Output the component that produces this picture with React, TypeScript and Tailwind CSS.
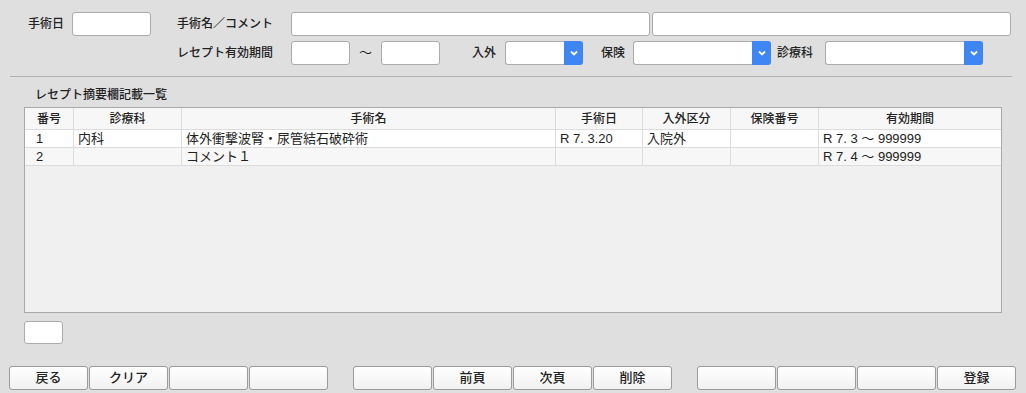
import React from "react";

const FONT = { fontFamily: '"Liberation Sans", "Noto Sans CJK JP", sans-serif' };

function Input({ w }: { w: string }) {
  return <div className={`${w} h-[24px] bg-white border border-[#ababab] rounded-[3px] shrink-0`} />;
}

function Select({ w }: { w: string }) {
  return (
    <div className={`${w} h-[24px] flex shrink-0`}>
      <div className="flex-1 bg-white border border-[#ababab] border-r-0 rounded-l-[3px]" />
      <div className="w-[19px] bg-[#3f86f5] rounded-r-[3px] flex items-center justify-center">
        <svg width="8" height="6" viewBox="0 0 8 6">
          <path d="M1 1.5 L4 4.5 L7 1.5" stroke="white" strokeWidth="1.8" fill="none" />
        </svg>
      </div>
    </div>
  );
}

function Btn({ label }: { label?: string }) {
  return (
    <div className="w-[79px] h-[24px] shrink-0 rounded-[3px] border border-[#9b9b9b] bg-gradient-to-b from-white to-[#f1f1f1] flex items-center justify-center text-[13px] font-medium text-[#222]">
      {label ?? ""}
    </div>
  );
}

const cols = [
  { w: "w-[49px]", h: "番号", pad: "pl-[11px]" },
  { w: "w-[108px]", h: "診療科", pad: "pl-[4px]" },
  { w: "w-[374px]", h: "手術名", pad: "pl-[4px]" },
  { w: "w-[87px]", h: "手術日", pad: "pl-[4px]" },
  { w: "w-[88px]", h: "入外区分", pad: "pl-[4px]" },
  { w: "w-[88px]", h: "保険番号", pad: "pl-[4px]" },
  { w: "w-[182px]", h: "有効期間", pad: "pl-[4px]" },
];

const rows = [
  ["1", "内科", "体外衝撃波腎・尿管結石破砕術", "R 7. 3.20", "入院外", "", "R 7. 3 ～ 999999"],
  ["2", "", "コメント１", "", "", "", "R 7. 4 ～ 999999"],
];

export default function App() {
  return (
    <div className="w-[1026px] h-[393px] bg-[#dfdfdf] text-[#222] overflow-hidden" style={FONT}>
      <div className="pt-[12px]">
        <div className="flex items-center h-[24px] pl-[28px]">
          <div className="w-[44px] text-[12px] font-medium">手術日</div>
          <Input w="w-[79px]" />
          <div className="w-[26px]" />
          <div className="w-[114px] text-[12px] font-medium">手術名／コメント</div>
          <Input w="w-[359px]" />
          <div className="w-[2px]" />
          <Input w="w-[359px]" />
        </div>
        <div className="flex items-center h-[24px] mt-[5px] pl-[177px]">
          <div className="w-[114px] text-[12px] font-medium">レセプト有効期間</div>
          <Input w="w-[59px]" />
          <div className="w-[31px] text-center text-[13px]">～</div>
          <Input w="w-[59px]" />
          <div className="w-[65px] text-right pr-[9px] text-[12px] font-medium">入外</div>
          <Select w="w-[78px]" />
          <div className="w-[50px] text-right pr-[8px] text-[12px] font-medium">保険</div>
          <Select w="w-[138px]" />
          <div className="w-[54px] pl-[6px] text-[12px] font-medium">診療科</div>
          <Select w="w-[158px]" />
        </div>
      </div>
      <div className="mt-[11px] ml-[10px] w-[1002px] h-[1px] bg-[#b3b3b3]" />
      <div className="h-[30px] pt-[6px] flex items-center pl-[35px] text-[12px] font-medium">レセプト摘要欄記載一覧</div>
      <div className="ml-[24px] w-[978px] h-[206px] border border-[#a9a9a9] bg-[#f0f0f0] overflow-hidden">
        <div className="flex h-[22px] bg-[#f7f7f7] border-b border-[#dcdcdc]">
          {cols.map((c, i) => (
            <div
              key={i}
              className={`${c.w} shrink-0 flex items-center justify-center text-[12px] font-medium border-r border-[#dcdcdc] last:border-r-0`}
            >
              {c.h}
            </div>
          ))}
        </div>
        {rows.map((r, ri) => (
          <div
            key={ri}
            className={`flex h-[18px] border-b border-[#dcdcdc] ${ri % 2 === 0 ? "bg-white" : "bg-[#f7f7f7]"}`}
          >
            {r.map((v, i) => (
              <div
                key={i}
                className={`${cols[i].w} ${cols[i].pad} shrink-0 flex items-center text-[13px] border-r border-[#dcdcdc] last:border-r-0 whitespace-nowrap`}
              >
                {v}
              </div>
            ))}
          </div>
        ))}
      </div>
      <div className="mt-[8px] ml-[24px] w-[39px] h-[23px] bg-white border border-[#ababab] rounded-[3px]" />
      <div className="mt-[22px] flex pl-[9px]">
        <div className="flex gap-[1px]">
          <Btn label="戻る" />
          <Btn label="クリア" />
          <Btn />
          <Btn />
        </div>
        <div className="w-[25px]" />
        <div className="flex gap-[1px]">
          <Btn />
          <Btn label="前頁" />
          <Btn label="次頁" />
          <Btn label="削除" />
        </div>
        <div className="w-[25px]" />
        <div className="flex gap-[1px]">
          <Btn />
          <Btn />
          <Btn />
          <Btn label="登録" />
        </div>
      </div>
    </div>
  );
}
